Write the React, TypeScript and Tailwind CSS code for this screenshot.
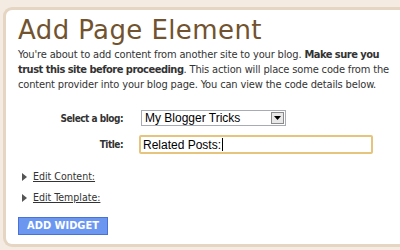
export default function App() {
  return (
    <div className="h-[250px] w-[400px] overflow-hidden bg-[#f4ece2] pl-[3px] pt-[7px] font-['DejaVu_Sans_Condensed','DejaVu_Sans',sans-serif] text-[#333]">
      <section className="h-[240px] rounded-l-[9px] border-[3px] border-r-0 border-[#e4d6c3] bg-white pl-3 pt-[6px]">
        <h1 className="font-['DejaVu_Sans',sans-serif] text-[26px] leading-[28px] tracking-[0.4px] text-[#72532f]">Add Page Element</h1>
        <p className="mt-[3px] w-[372px] text-[11px] leading-[15px] tracking-[-0.15px]">
          You&apos;re about to add content from another site to your blog. <b className="tracking-[-0.5px]">Make sure you trust this site before proceeding</b>. This action will place some code from the content provider into your blog page. You can view the code details below.
        </p>

        <div className="mt-[18px] flex items-center">
          <label className="w-[105px] text-right text-[10px] font-bold tracking-[-0.5px]">Select a blog:</label>
          <div className="ml-[18px] flex h-[16px] w-[145px] items-center border border-[#a5acb5] bg-white">
            <span className="flex-1 pl-[3px] font-['Liberation_Sans',sans-serif] text-[12px] leading-none text-black">My Blogger Tricks</span>
            <span className="mr-[1px] flex h-[12px] w-[13px] items-center justify-center border border-[#8a8a8a] bg-[#e8e8e8]">
              <svg width="7" height="4" viewBox="0 0 7 4"><path d="M0 0h7L3.5 4z" fill="#000" /></svg>
            </span>
          </div>
        </div>

        <div className="mt-[9px] flex items-center">
          <label className="w-[105px] text-right text-[10px] font-bold tracking-[-0.5px]">Title:</label>
          <div className="ml-[16px] flex h-[19px] w-[234px] items-center rounded-[2px] border-2 border-[#e7c47e] bg-white pl-[2px]">
            <span className="font-['Liberation_Sans',sans-serif] text-[12px] leading-none text-black">Related Posts:</span>
            <span className="ml-[1px] h-[13px] w-px bg-black" />
          </div>
        </div>

        <div className="mt-[15px] flex items-center gap-[6px] pl-[4px] text-[10.5px]">
          <svg width="5" height="8" viewBox="0 0 5 8"><path d="M0 0l5 4-5 4z" fill="#555" /></svg>
          <span className="underline">Edit Content:</span>
        </div>
        <div className="mt-[5px] flex items-center gap-[6px] pl-[4px] text-[10.5px]">
          <svg width="5" height="8" viewBox="0 0 5 8"><path d="M0 0l5 4-5 4z" fill="#555" /></svg>
          <span className="underline">Edit Template:</span>
        </div>

        <button className="mt-[11px] h-[18px] w-[90px] border border-[#4a72d6] bg-[#6b97f0] text-[11px] font-bold leading-none text-white">
          ADD WIDGET
        </button>
      </section>
    </div>
  );
}
